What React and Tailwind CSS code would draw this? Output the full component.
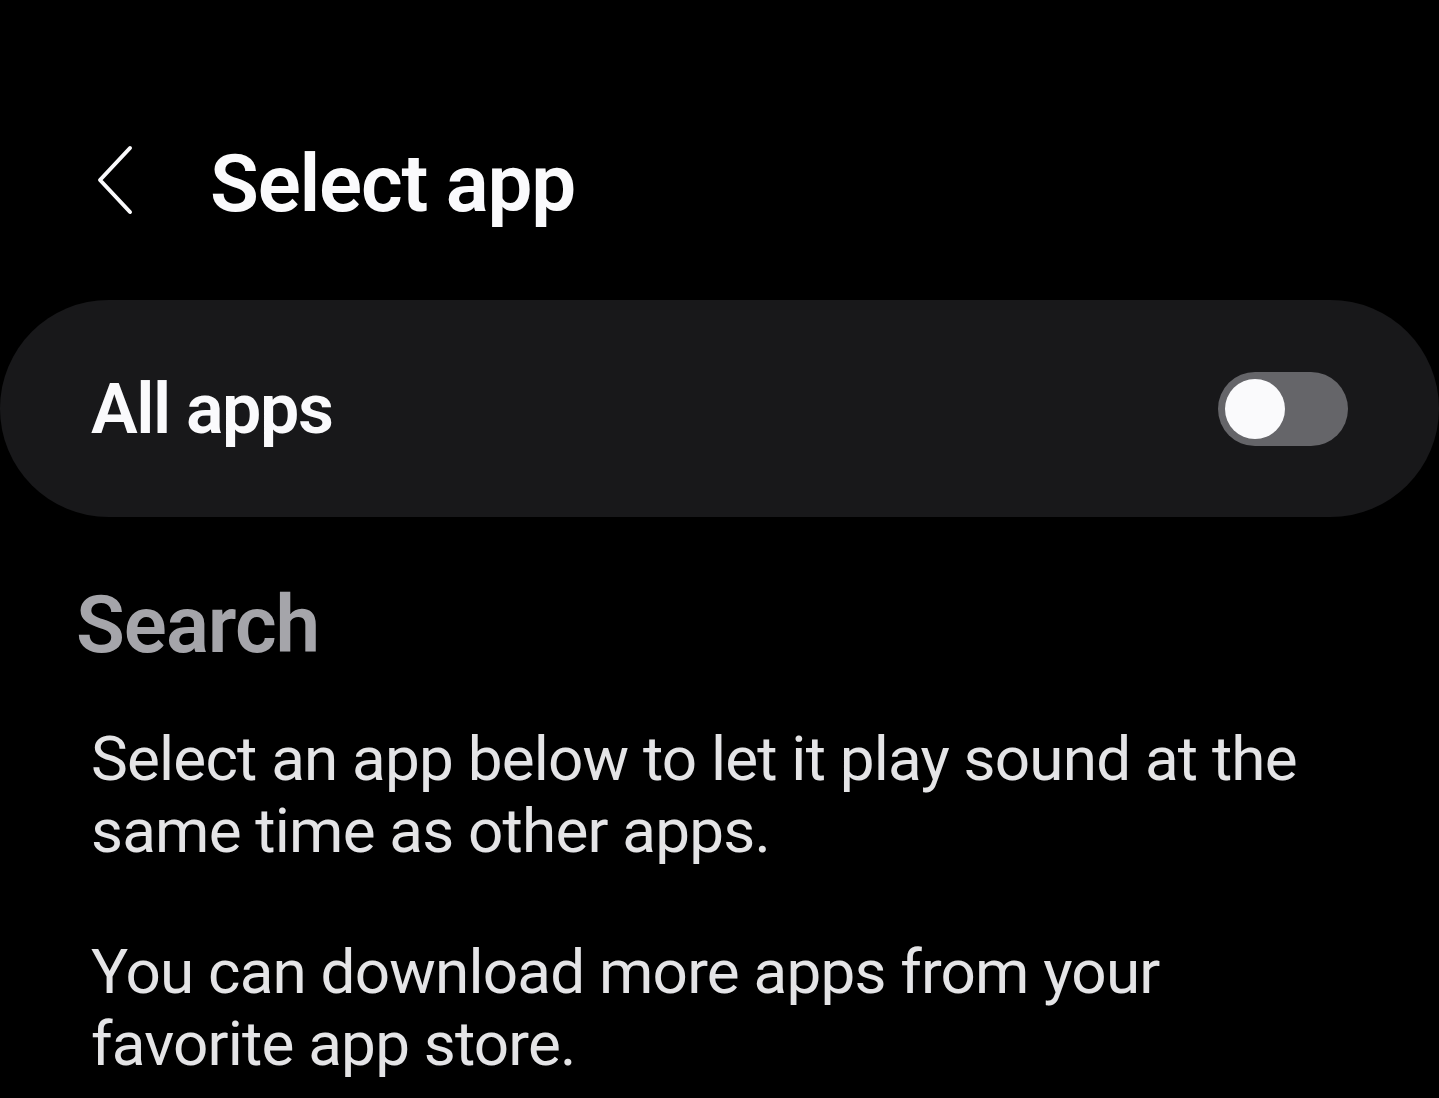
import React from 'react';

const Toggle = () => (
  <div className="flex h-[74px] w-[130px] items-center rounded-full bg-[#656569] pl-[7px]">
    <div className="h-[60px] w-[60px] rounded-full bg-[#fafafc]" />
  </div>
);

export default function App() {
  return (
    <div className="min-h-screen w-full bg-black font-['Roboto','Liberation_Sans',sans-serif] text-[#fafafc]">
      <header className="flex items-center pl-[94px] pt-[144px]">
        <svg width="40" height="80" viewBox="0 0 40 80" fill="none" stroke="#fafafc" strokeWidth="4" strokeLinecap="round" strokeLinejoin="round">
          <polyline points="36,4 6,36 36,68" />
        </svg>
        <h1 className="ml-[76px] text-[80px] font-semibold leading-[80px] tracking-[-1.2px]">Select app</h1>
      </header>

      <div className="mt-[76px] flex h-[217px] w-full items-center justify-between rounded-full bg-[#18181a] px-[91px]">
        <span className="text-[70px] font-semibold leading-[70px] tracking-[-1.4px]">All apps</span>
        <Toggle />
      </div>

      <h2 className="mt-[68px] pl-[76px] text-[80px] font-semibold leading-[80px] tracking-[-1px] text-[#a5a5aa]">Search</h2>

      <div className="mt-[58px] px-[91px] text-[62px] leading-[72px] tracking-[-0.8px] text-[#e4e4e6]">
        <p>Select an app below to let it play sound at the same time as other apps.</p>
        <p className="mt-[69px]">You can download more apps from your favorite app store.</p>
      </div>
    </div>
  );
}
